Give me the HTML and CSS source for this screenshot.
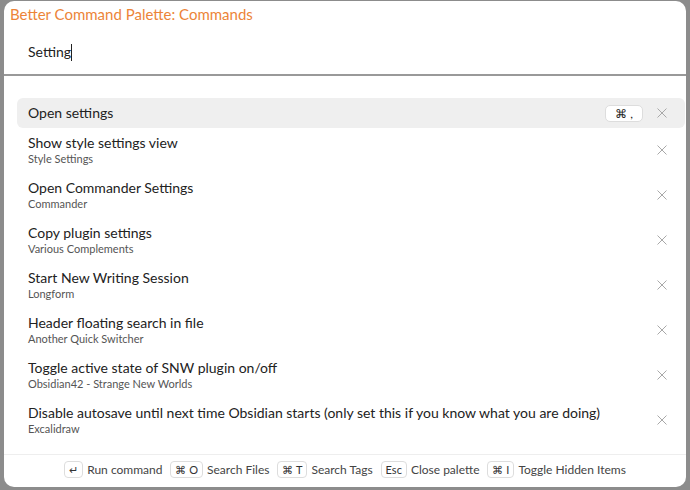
FILE: index.html
```html
<!DOCTYPE html>
<html lang="en">
<head>
  <meta charset="UTF-8">
  <title>Better Command Palette</title>
  <link rel="stylesheet" href="styles.css">
</head>
<body>
  <div class="modal">
    <div class="palette-title">Better Command Palette: Commands</div>

    <!-- Search input -->
    <div class="search">
      <span class="query">Setting</span><span class="caret"></span>
    </div>

    <!-- Results -->
    <ul class="results">
      <li class="item selected">
        <div class="item-text">
          <div class="item-name">Open settings</div>
        </div>
        <span class="hotkey">⌘ ,</span>
        <svg class="hide-btn" viewBox="0 0 10 10"><path d="M0.5 0.5L9.5 9.5M9.5 0.5L0.5 9.5"/></svg>
      </li>
      <li class="item">
        <div class="item-text">
          <div class="item-name">Show style settings view</div>
          <div class="item-plugin">Style Settings</div>
        </div>
        <svg class="hide-btn" viewBox="0 0 10 10"><path d="M0.5 0.5L9.5 9.5M9.5 0.5L0.5 9.5"/></svg>
      </li>
      <li class="item">
        <div class="item-text">
          <div class="item-name">Open Commander Settings</div>
          <div class="item-plugin">Commander</div>
        </div>
        <svg class="hide-btn" viewBox="0 0 10 10"><path d="M0.5 0.5L9.5 9.5M9.5 0.5L0.5 9.5"/></svg>
      </li>
      <li class="item">
        <div class="item-text">
          <div class="item-name">Copy plugin settings</div>
          <div class="item-plugin">Various Complements</div>
        </div>
        <svg class="hide-btn" viewBox="0 0 10 10"><path d="M0.5 0.5L9.5 9.5M9.5 0.5L0.5 9.5"/></svg>
      </li>
      <li class="item">
        <div class="item-text">
          <div class="item-name">Start New Writing Session</div>
          <div class="item-plugin">Longform</div>
        </div>
        <svg class="hide-btn" viewBox="0 0 10 10"><path d="M0.5 0.5L9.5 9.5M9.5 0.5L0.5 9.5"/></svg>
      </li>
      <li class="item">
        <div class="item-text">
          <div class="item-name">Header floating search in file</div>
          <div class="item-plugin">Another Quick Switcher</div>
        </div>
        <svg class="hide-btn" viewBox="0 0 10 10"><path d="M0.5 0.5L9.5 9.5M9.5 0.5L0.5 9.5"/></svg>
      </li>
      <li class="item">
        <div class="item-text">
          <div class="item-name">Toggle active state of SNW plugin on/off</div>
          <div class="item-plugin">Obsidian42 - Strange New Worlds</div>
        </div>
        <svg class="hide-btn" viewBox="0 0 10 10"><path d="M0.5 0.5L9.5 9.5M9.5 0.5L0.5 9.5"/></svg>
      </li>
      <li class="item">
        <div class="item-text">
          <div class="item-name">Disable autosave until next time Obsidian starts (only set this if you know what you are doing)</div>
          <div class="item-plugin">Excalidraw</div>
        </div>
        <svg class="hide-btn" viewBox="0 0 10 10"><path d="M0.5 0.5L9.5 9.5M9.5 0.5L0.5 9.5"/></svg>
      </li>
    </ul>

    <!-- Instructions -->
    <div class="instructions">
      <span class="instruction"><kbd>↵</kbd>Run command</span>
      <span class="instruction"><kbd>⌘ O</kbd>Search Files</span>
      <span class="instruction"><kbd>⌘ T</kbd>Search Tags</span>
      <span class="instruction"><kbd>Esc</kbd>Close palette</span>
      <span class="instruction"><kbd>⌘ I</kbd>Toggle Hidden Items</span>
    </div>
  </div>
</body>
</html>
```

FILE: styles.css
```css
* {
  margin: 0;
  padding: 0;
  box-sizing: border-box;
}

body {
  font-family: Lato, "Noto Sans", sans-serif;
  background-color: #8c8c8c;
  color: #222;
  height: 490px;
  overflow: hidden;
}

.modal {
  margin: 1px 4px 0 4px;
  height: 486px;
  background-color: #fff;
  border-radius: 10px;
  display: flex;
  flex-direction: column;
  overflow: hidden;
}

.palette-title {
  color: #ec8438;
  font-size: 15px;
  padding: 4px 0 0 6px;
  height: 29px;
}

.search {
  height: 46px;
  padding: 13px 0 0 24px;
  font-size: 14px;
  border-bottom: 2px solid #999;
  display: flex;
  align-items: flex-start;
}

.caret {
  display: inline-block;
  width: 1px;
  height: 17px;
  margin-top: 1px;
  background-color: #222;
}

.results {
  list-style: none;
  padding: 22px 1px 0 13px;
  flex: 1;
}

.item {
  display: flex;
  align-items: center;
  padding: 6px 18px 7px 11px;
  border-radius: 6px;
  min-height: 44.8px;
}

.item.selected {
  background-color: #efefef;
  min-height: 30px;
  padding-top: 5px;
  padding-bottom: 5px;
}

.item-text {
  flex: 1;
}

.item-name {
  font-size: 14px;
  line-height: 18px;
}

.item-plugin {
  font-size: 11px;
  color: #555;
  line-height: 14px;
}

.hotkey {
  font-size: 12px;
  background-color: #fff;
  border: 1px solid #ddd;
  border-radius: 5px;
  padding: 0 9px;
  height: 17px;
  line-height: 15px;
  margin-right: 14px;
}

.hide-btn {
  width: 10px;
  height: 10px;
  fill: none;
  stroke: #a8a8a8;
  stroke-width: 1;
}

.instructions {
  height: 33px;
  border-top: 1px solid #eee;
  display: flex;
  justify-content: center;
  align-items: center;
  gap: 8px;
  font-size: 12px;
  color: #444;
  padding-bottom: 3px;
}

.instruction kbd {
  font-family: inherit;
  font-size: 11px;
  border: 1px solid #ddd;
  border-radius: 4px;
  padding: 1px 4px;
  margin-right: 4px;
  color: #333;
}
```
